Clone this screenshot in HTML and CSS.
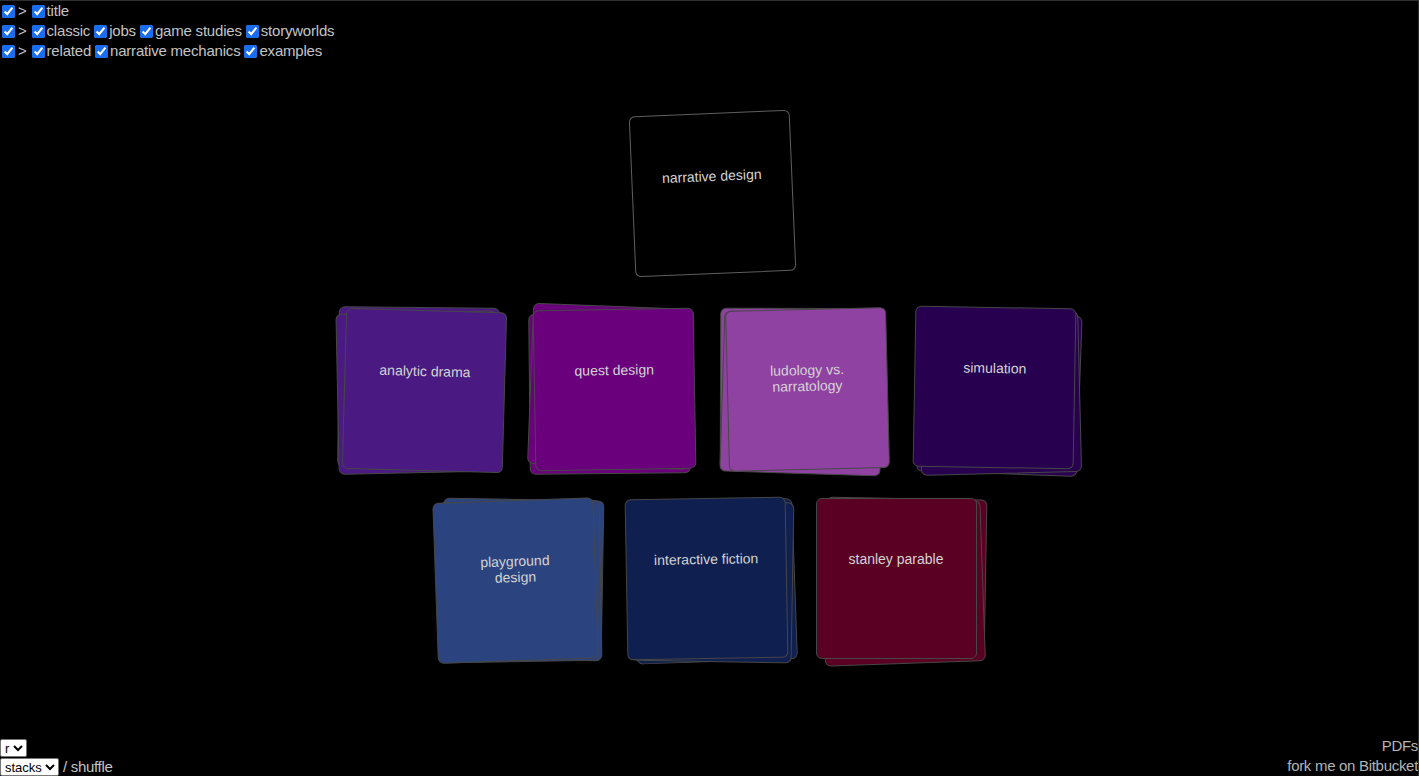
FILE: index.html
```html
<!DOCTYPE html>
<html>
<head>
<meta charset="utf-8">
<title>narrative design</title>
<link rel="stylesheet" href="styles.css">
</head>
<body>
<div class="frame">
  <div class="filters">
    <div class="line"><input type="checkbox" checked><span class="gt">&gt;</span><input type="checkbox" checked><span>title</span></div>
    <div class="line"><input type="checkbox" checked><span class="gt">&gt;</span><input type="checkbox" checked><span>classic</span><input type="checkbox" checked><span>jobs</span><input type="checkbox" checked><span>game studies</span><input type="checkbox" checked><span>storyworlds</span></div>
    <div class="line"><input type="checkbox" checked><span class="gt">&gt;</span><input type="checkbox" checked><span>related</span><input type="checkbox" checked><span>narrative mechanics</span><input type="checkbox" checked><span>examples</span></div>
  </div>

  <main class="board">
    <div class="row row-title">
      <div class="stack">
        <div class="card title-card"><p>narrative design</p></div>
      </div>
    </div>

    <div class="row row-one">
      <div class="stack c-analytic">
        <div class="card b2 s1b2"></div>
        <div class="card b1 s1b1"></div>
        <div class="card front s1f"><p>analytic drama</p></div>
      </div>
      <div class="stack c-quest">
        <div class="card b2 s2b2"></div>
        <div class="card b1 s2b1"></div>
        <div class="card front s2f"><p>quest design</p></div>
      </div>
      <div class="stack c-ludo">
        <div class="card b2 s3b2"></div>
        <div class="card b1 s3b1"></div>
        <div class="card front s3f"><p>ludology vs. narratology</p></div>
      </div>
      <div class="stack c-sim">
        <div class="card b2 s4b2"></div>
        <div class="card b1 s4b1"></div>
        <div class="card front s4f"><p>simulation</p></div>
      </div>
    </div>

    <div class="row row-two">
      <div class="stack c-play">
        <div class="card b2 s5b2"></div>
        <div class="card b1 s5b1"></div>
        <div class="card front s5f"><p>playground design</p></div>
      </div>
      <div class="stack c-if">
        <div class="card b2 s6b2"></div>
        <div class="card b1 s6b1"></div>
        <div class="card front s6f"><p>interactive fiction</p></div>
      </div>
      <div class="stack c-stanley">
        <div class="card b2 s7b2"></div>
        <div class="card b1 s7b1"></div>
        <div class="card front s7f"><p>stanley parable</p></div>
      </div>
    </div>
  </main>

  <footer class="footer">
    <div class="left">
      <div class="fline"><select class="sel"><option>r</option></select></div>
      <div class="fline"><select class="sel"><option>stacks</option></select><span class="slash">/ shuffle</span></div>
    </div>
    <div class="right">
      <div class="fline">PDFs</div>
      <div class="fline">fork me on Bitbucket</div>
    </div>
  </footer>
</div>
</body>
</html>
```

FILE: styles.css
```css
html, body {
  margin: 0;
  padding: 0;
  background: #000;
}
body {
  font-family: "Liberation Sans", Arial, sans-serif;
  color: #c4c4c4;
}
.frame {
  box-sizing: border-box;
  height: 100vh;
  border-top: 1px solid #2e2e2e;
  border-right: 1px solid #2e2e2e;
  display: flex;
  flex-direction: column;
  overflow: hidden;
}
.filters {
  font-size: 15px;
  letter-spacing: -0.2px;
  line-height: 20px;
}
.line {
  display: flex;
  align-items: center;
  height: 20px;
  white-space: nowrap;
}
.line input {
  width: 13px;
  height: 13px;
  margin: 0 2px 0 2px;
  accent-color: #1a6cf0;
}
.line span {
  margin-right: 2px;
}
.line .gt {
  margin: 0 3px 0 1px;
}
.board {
  flex: 1;
  display: flex;
  flex-direction: column;
  align-items: center;
  padding-top: 52px;
}
.row {
  display: flex;
  justify-content: center;
  gap: 30px;
}
.row-title {
  margin-left: 6px;
}
.row-one {
  margin-top: 34px;
}
.row-two {
  margin-top: 29px;
}
.stack {
  position: relative;
  width: 161px;
  height: 161px;
}
.card {
  position: absolute;
  inset: 0;
  box-sizing: border-box;
  border: 1px solid #474747;
  border-radius: 6px;
}
.card p {
  margin: 0;
  padding: 52px 24px 0;
  text-align: center;
  font-size: 14px;
  line-height: 16px;
  color: #d4d4d4;
}
.title-card {
  background: #000;
  border-color: #5e5e5e;
  transform: rotate(-2.4deg);
}
.title-card p {
  padding-top: 54px;
}

/* colours */
.c-analytic .card { background: #4a1a82; }
.c-quest .card { background: #6a007c; }
.c-ludo .card { background: #9042a2; }
.c-sim .card { background: #280050; }
.c-play .card { background: #2b4480; }
.c-if .card { background: #0f1f4f; }
.c-stanley .card { background: #5a0022; }

/* tilts */
.s1f { transform: rotate(1.6deg) translate(2px, 2px); }
.s1b1 { transform: rotate(-1.2deg) translate(-5px, 4px); }
.s1b2 { transform: rotate(0.6deg) translate(-4px, -1px); }

.s2f { transform: rotate(-1deg) translate(1px, 1px); }
.s2b1 { transform: rotate(2.2deg) translate(-3px, -2px); }
.s2b2 { transform: rotate(-0.6deg) translate(-4px, 5px); }

.s3f { transform: rotate(-1.4deg) translate(3px, 1px); }
.s3b1 { transform: rotate(1.8deg) translate(-2px, 5px); }
.s3b2 { transform: rotate(0.2deg) translate(-4px, 0); }

.s4f { transform: rotate(1deg) translate(-1px, -1px); }
.s4b1 { transform: rotate(-1.4deg) translate(4px, 5px); }
.s4b2 { transform: rotate(2deg) translate(4px, 5px); }

.s5f { transform: rotate(-2deg) translate(-3px, 2px); }
.s5b1 { transform: rotate(-1deg) translate(2px, 3px); }
.s5b2 { transform: rotate(1deg) translate(4px, 1px); }

.s6f { transform: rotate(-1deg) translate(-3px, 0); }
.s6b1 { transform: rotate(1deg) translate(3px, 3px); }
.s6b2 { transform: rotate(-2deg) translate(5px, 3px); }

.s7f { transform: rotate(0deg) translate(-4px, 0); }
.s7b1 { transform: rotate(-2deg) translate(2px, 5px); }
.s7b2 { transform: rotate(1deg) translate(5px, 0); }

.footer {
  display: flex;
  justify-content: space-between;
  align-items: flex-end;
  font-size: 15px;
  letter-spacing: -0.3px;
  line-height: 20px;
}
.fline {
  height: 20px;
  display: flex;
  align-items: center;
  white-space: nowrap;
}
.left .fline:last-child {
  align-items: flex-end;
  height: 18px;
}
.right {
  text-align: right;
  color: #b4b4b4;
}
.right .fline {
  justify-content: flex-end;
}
.sel {
  font-family: "Liberation Sans", Arial, sans-serif;
  font-size: 13px;
  letter-spacing: 0;
  margin: 0;
  padding: 0;
  height: 18px;
  background: #fff;
  color: #000;
  border: 1px solid #767676;
  border-radius: 2px;
}
.slash {
  margin-left: 4px;
  line-height: 18px;
}
```
